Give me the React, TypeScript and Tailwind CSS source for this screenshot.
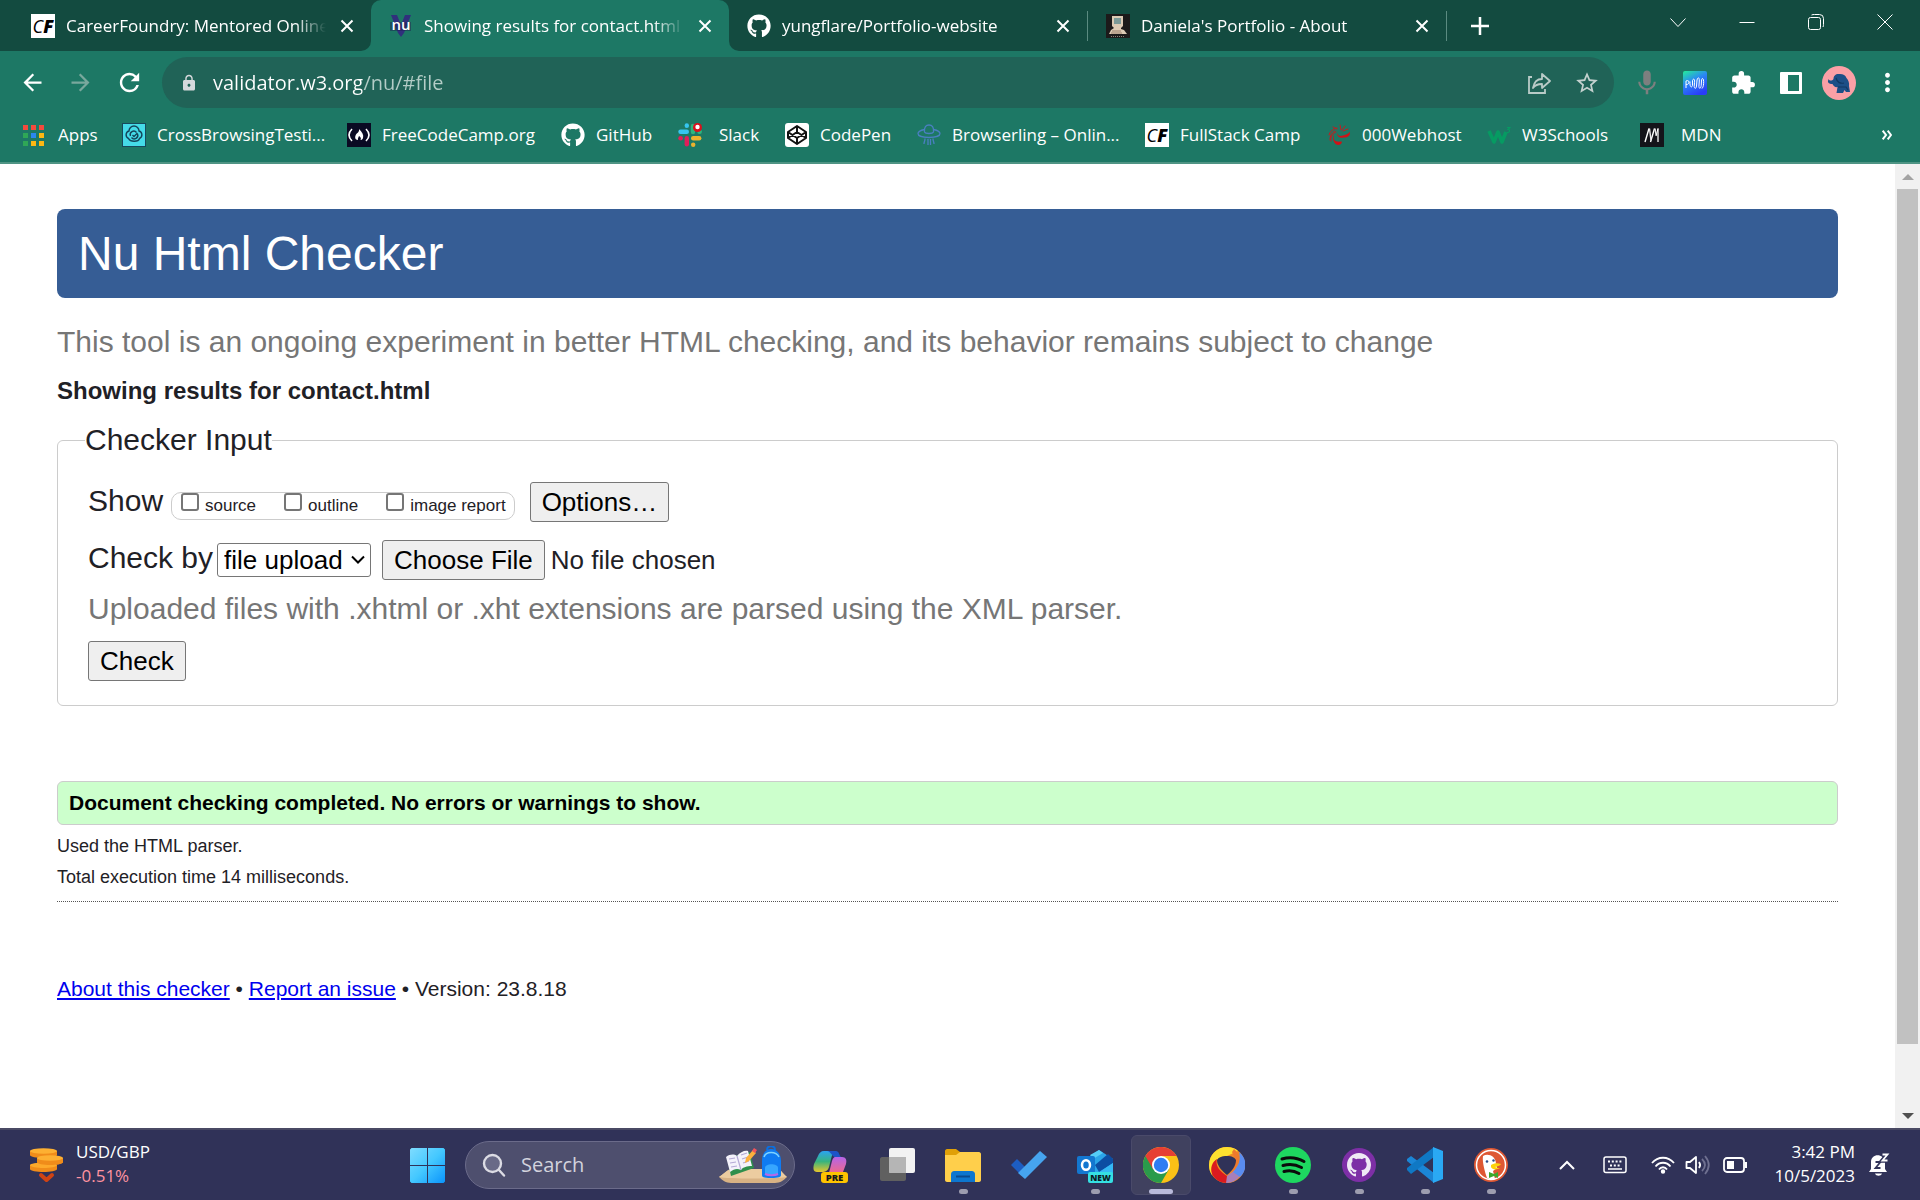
import React from "react";
import type { ReactNode } from "react";
import {
  MdArrowBack,
  MdArrowForward,
  MdRefresh,
  MdLock,
  MdStarBorder,
  MdMic,
  MdExtension,
  MdMoreVert,
} from "react-icons/md";
import { FaGithub } from "react-icons/fa";

/* ---------- Small site icons ---------- */

const CareerFoundryIcon = () => (
  <span className="flex size-6 shrink-0 items-center justify-center bg-white text-[18px] leading-6 text-black italic">
    C<b className="font-black">F</b>
  </span>
);

const NuIcon = () => (
  <svg viewBox="0 0 24 24" className="size-6 shrink-0">
    <path d="M2 1h6l4 10 4-10h6l-7 18-3 4-3-4z" fill="#30307c" />
    <path d="M1 8h21v9H1z" fill="#1c1c50" opacity=".45" />
    <text x="12" y="16" textAnchor="middle" fontSize="15" fontWeight="600" fontFamily="Open Sans, sans-serif" fill="#fff">
      nu
    </text>
  </svg>
);

const ComputerIcon = () => (
  <svg viewBox="0 0 24 24" className="size-6 shrink-0">
    <rect width="24" height="24" fill="#1c1a1a" />
    <path d="M6 2h11v10l-2 2v1l3 1 3 4H3l2-4 3-2-2-2z" fill="#dccbb5" />
    <rect x="8" y="4" width="7" height="6" fill="#7c9a98" />
    <path d="M6 17h9M5 19h11" stroke="#8d6f5c" strokeWidth=".8" />
    <path d="M5 22.500h14" stroke="#8b8377" strokeWidth="1" strokeDasharray="1 1" />
  </svg>
);

const AppsIcon = () => (
  <svg viewBox="0 0 24 24" className="size-6 shrink-0">
    {["#f44a3d", "#f44a3d", "#f44a3d", "#2fa756", "#2b87f0", "#fdb813", "#2fa756", "#fdb813", "#fdb813"].map((c, i) => (
      <rect key={i} x={(i % 3) * 8} y={2 + Math.floor(i / 3) * 8} width="5" height="5" fill={c} />
    ))}
  </svg>
);

const CrossBrowserIcon = () => (
  <svg viewBox="0 0 24 24" className="size-6 shrink-0">
    <rect x=".5" y=".5" width="23" height="23" fill="#45dbe8" stroke="#174a5c" />
    <path d="M6.500 15.500a4 4 0 0 1 .5-7.500 5 5 0 0 1 10 0 4 4 0 0 1 .5 7.500c-1 3.500-9 4-11 0zM8.500 13a3.500 3.500 0 0 1 6-3.500M15.500 11a3.500 3.500 0 0 1-6 3.500M10.500 12l1.500 1.500 3.500-3.500" fill="none" stroke="#14455a" strokeWidth="1.400" />
  </svg>
);

const FreeCodeCampIcon = () => (
  <svg viewBox="0 0 24 24" className="size-6 shrink-0">
    <rect width="24" height="24" fill="#0a0a23" />
    <path d="M5 6c-4 4-4 8 0 12M19 6c4 4 4 8 0 12" fill="none" stroke="#fff" strokeWidth="1.600" />
    <path d="M12 6c3 3 5 6 4 9-.5 1.500-1.500 2-2.500 2 1-2 0-3-1.500-4-.5 1.500-1.500 2.500-1 4-3 0-3.500-3-2-5.500C10.500 9.500 12.500 9 12 6z" fill="#fff" />
  </svg>
);

const SlackIcon = () => (
  <svg viewBox="0 0 24 24" className="size-6 shrink-0">
    <g strokeLinecap="round" strokeWidth="4.400">
      <path d="M2.500 8.800h6.300" stroke="#36c5f0" />
      <path d="M8.800 2.400v.4" stroke="#36c5f0" />
      <path d="M15 3v6" stroke="#2eb67d" />
      <path d="M21.500 8.800h.2" stroke="#2eb67d" />
      <path d="M15.200 15.300h6" stroke="#ecb22e" />
      <path d="M15.200 21.600v.1" stroke="#ecb22e" />
      <path d="M8.800 15.300v6" stroke="#e01e5a" />
      <path d="M2.500 15.300h.2" stroke="#e01e5a" />
    </g>
    <circle cx="19.500" cy="4.500" r="4.500" fill="#d8111d" />
    <circle cx="19.500" cy="4" r="2.200" fill="#fff" />
  </svg>
);

const CodePenIcon = () => (
  <svg viewBox="0 0 24 24" className="size-6 shrink-0">
    <rect width="24" height="24" rx="3" fill="#fff" />
    <path d="M12 3l9 6v6l-9 6-9-6V9zM12 3v6.200M12 14.800V21M3 9l9 6 9-6M3 15l9-6 9 6" fill="none" stroke="#111" strokeWidth="2" strokeLinejoin="round" />
  </svg>
);

const BrowserlingIcon = () => (
  <svg viewBox="0 0 24 24" className="size-6 shrink-0" fill="none" stroke="#4a7fc1" strokeWidth="1.300">
    <path d="M7.500 9C7 4 9 2 12 2s5 2 4.500 7c-1 2-8 2-9 0zM7.500 6.500C3 7.500 1 9 1 10.500 1 13 6 14.500 12 14.500s11-1.500 11-4c0-1.500-2-3-6.500-4" />
    <path d="M8 15.500c0 3-1 3-1 5.500M11 16v6M13.500 16v6M16 15.500c0 3 1 3 1 5.500" />
  </svg>
);

const WebhostIcon = () => (
  <svg viewBox="0 0 24 24" className="size-6 shrink-0">
    <path d="M10 10c1 3 3 3.500 6 2.500 3-1 6-1.500 6.500-4 1.500 4-2 6-5.500 6-4 1-7-1-7-4.500z" fill="#d01217" />
    <path d="M7 11c-1 4 0 7 3 7.500 2 .5 4-.5 5 .5-1 4-6 4-8 0-1.500-3-1.500-6 0-8z" fill="#d01217" />
    <path d="M10 5C6 6 3 8 2 12M8 8c-4 2-5 5-5 9M9 9c-4 2-6 5-5 9M6 4l4 2M13 2l1 5M18 3l-3 4M21 6l-5 2" fill="none" stroke="#c81a1d" strokeWidth="1" strokeLinecap="round" />
  </svg>
);

const W3Icon = () => (
  <svg viewBox="0 0 24 24" className="size-6 shrink-0" fill="none" stroke="#069b62">
    <path d="M2 8l5 11 4-10 4 10 4-10" strokeWidth="3.600" strokeLinejoin="round" />
    <path d="M20 4.500h3l-2 2c2 0 2.500 3-1 3" strokeWidth="1.100" />
  </svg>
);

const MdnIcon = () => (
  <svg viewBox="0 0 24 24" className="size-6 shrink-0">
    <rect width="24" height="24" fill="#14141a" />
    <path d="M5 19L9 5.500M10.500 19L14.500 5.500" fill="none" stroke="#fff" strokeWidth="1.400" />
    <path d="M9.500 5.500l1.500 12M15 5.500l1.200 7M18 5.500V19" fill="none" stroke="#e6e6e6" strokeWidth="1.400" />
    <path d="M16 13l2-7.500" fill="none" stroke="#fff" strokeWidth="1" />
  </svg>
);

/* ---------- Browser frame ---------- */

const CrossGlyph = () => (
  <svg viewBox="0 0 14 14" className="size-3.5" fill="none" stroke="#fff" strokeWidth="2">
    <path d="M1.500 1.500l11 11M12.500 1.500l-11 11" />
  </svg>
);

function Tab({ icon, title }: { icon: ReactNode; title: string }) {
  return (
    <div className="flex h-full w-[358px] items-center pr-[17px] pl-[18px]">
      {icon}
      <span className="mr-3.5 ml-[11px] min-w-0 flex-1 overflow-hidden text-[17px] whitespace-nowrap [mask-image:linear-gradient(to_right,#000_88%,transparent)]">
        {title}
      </span>
      <button aria-label={`Close ${title}`}>
        <CrossGlyph />
      </button>
    </div>
  );
}

function TabStrip() {
  return (
    <div className="flex h-[51px] bg-[#1d7865]">
      <div className="rounded-br-[10px] bg-[#134b40] pl-[13px]">
        <Tab icon={<CareerFoundryIcon />} title="CareerFoundry: Mentored Online" />
      </div>
      <div className="bg-[#134b40]">
        <div className="h-full rounded-t-[10px] bg-[#1d7865]">
          <Tab icon={<NuIcon />} title="Showing results for contact.html" />
        </div>
      </div>
      <div className="flex min-w-0 flex-1 items-center rounded-bl-[10px] bg-[#134b40]">
        <Tab icon={<FaGithub size={24} className="shrink-0" />} title="yungflare/Portfolio-website" />
        <div className="h-[30px] w-px bg-[#5b8b81]" />
        <Tab icon={<ComputerIcon />} title="Daniela's Portfolio - About" />
        <div className="h-[30px] w-px bg-[#5b8b81]" />
        <button aria-label="New tab" className="ml-6">
          <svg viewBox="0 0 18 18" className="size-[18px]" stroke="#fff" strokeWidth="2.500">
            <path d="M9 0v18M0 9h18" />
          </svg>
        </button>
        <div className="mr-[27px] mb-2 ml-auto flex gap-[53px]">
          <button aria-label="Search tabs">
            <svg viewBox="0 0 16 16" className="size-4" fill="none" stroke="#fff">
              <path d="M.5 4.500L8 12.500l7.500-8" />
            </svg>
          </button>
          <button aria-label="Minimize">
            <svg viewBox="0 0 16 16" className="size-4" fill="none" stroke="#fff">
              <path d="M.5 8.500h15" />
            </svg>
          </button>
          <button aria-label="Restore">
            <svg viewBox="0 0 16 16" className="size-4" fill="none" stroke="#fff">
              <rect x=".5" y="3.500" width="12" height="12" rx="2" />
              <path d="M3.500 1c1-.5 2-.5 3-.5h5a4 4 0 0 1 4 4v6c0 1 0 1.500-.5 2.500" />
            </svg>
          </button>
          <button aria-label="Close window">
            <svg viewBox="0 0 16 16" className="size-4" fill="none" stroke="#fff">
              <path d="M.5.5l15 15M15.500.5l-15 15" />
            </svg>
          </button>
        </div>
      </div>
    </div>
  );
}

const toolButton = "flex w-12 shrink-0 items-center justify-center";

function Toolbar() {
  return (
    <div className="flex items-center pt-1.5 pr-[9px] pl-[19px]">
      <button aria-label="Back">
        <MdArrowBack size={27} />
      </button>
      <button aria-label="Forward" className="ml-[21px] text-[#79a89d]">
        <MdArrowForward size={27} />
      </button>
      <button aria-label="Reload" className="ml-[21px]">
        <MdRefresh size={29} />
      </button>
      <div className="ml-[18px] flex h-[51px] min-w-0 flex-1 items-center rounded-full bg-[#206357] pr-[3px] pl-[18px]">
        <MdLock size={18} className="shrink-0 text-[#d5d9dc]" />
        <input
          aria-label="Address"
          defaultValue="validator.w3.org/nu/#file"
          className="ml-[15px] min-w-0 flex-1 bg-[linear-gradient(to_right,#ffffff_149px,#b4cdc7_149px)] bg-clip-text text-[20px] text-transparent outline-none"
        />
        <button aria-label="Share" className={toolButton}>
          <svg viewBox="0 0 24 24" className="size-6" fill="none" stroke="#b9cbc7" strokeWidth="1.800">
            <path d="M5 6H2v16h16v-4" />
            <path d="M6 17c1-6 4-9 9-9V3l8 7-8 7v-4c-4 0-7 1-9 4z" strokeLinejoin="round" />
          </svg>
        </button>
        <button aria-label="Bookmark this page" className={`text-[#c3d1ce] ${toolButton}`}>
          <MdStarBorder size={26} />
        </button>
      </div>
      <div className="ml-[9px] flex items-center">
        <button aria-label="Voice" className={`text-[#7d7f7f] ${toolButton}`}>
          <MdMic size={30} />
        </button>
        <button aria-label="Audio extension" className={toolButton}>
          <svg viewBox="0 0 24 24" className="size-6">
            <defs>
              <linearGradient id="ext" x1=".1" y1="0" x2=".6" y2="1">
                <stop offset="0" stopColor="#25e6a0" />
                <stop offset=".45" stopColor="#2a86f5" />
                <stop offset="1" stopColor="#2a3df8" />
              </linearGradient>
            </defs>
            <rect width="24" height="24" rx="2" fill="url(#ext)" />
            <path
              d="M3 17V10M3 10c4-2 4 4 0 3.500M7 10.500c-.5 5 1.500 7 2.500 4V9.500c1-2.500 2.500-1.500 2 2l-.3 4c.5 3 2 2 2.300-.5l.5-6c1-3.500 2.500-2.500 2.300 1l-.4 5.500c.5 3 1.800 2 2.300-1l.4-6c1-2.500 2.400 0 2 4-.2 3-.8 4-1.600 5"
              fill="none"
              stroke="#fff"
              strokeWidth="1"
            />
          </svg>
        </button>
        <button aria-label="Extensions" className={toolButton}>
          <MdExtension size={26} />
        </button>
        <button aria-label="Side panel" className={toolButton}>
          <svg viewBox="0 0 22 22" className="size-[22px]">
            <rect width="22" height="22" rx="1" fill="#fff" />
            <rect x="8" y="3" width="11" height="16" fill="#1d7865" />
          </svg>
        </button>
        <button aria-label="Profile" className={toolButton}>
          <svg viewBox="0 0 34 34" className="size-[34px]">
            <circle cx="17" cy="17" r="17" fill="#fba0a6" />
            <path d="M6.500 13c1 2 3.500 2 5 0 0-3 2-5 5-5 4-.5 7 1 8 4 2 2 3 5 2.500 8l1 6h-4l-1.500-2-1.500 3h-6.500l1-6c-2 .5-4-.5-5-3-2 .5-5-1-4.500-3z" fill="#1d4f87" />
            <path d="M14 12c1 4 4 6 8 5M16 21h8l2 3" stroke="#123863" strokeWidth="1.200" fill="none" />
          </svg>
        </button>
        <button aria-label="Menu" className={toolButton}>
          <MdMoreVert size={29} />
        </button>
      </div>
    </div>
  );
}

const bookmarks: { label: string; icon: ReactNode; box: string }[] = [
  { label: "Apps", icon: <AppsIcon />, box: "w-[99px] gap-[11px]" },
  { label: "CrossBrowsingTesti...", icon: <CrossBrowserIcon />, box: "w-[225px] gap-[11px]" },
  { label: "FreeCodeCamp.org", icon: <FreeCodeCampIcon />, box: "w-[214px] gap-[11px]" },
  { label: "GitHub", icon: <FaGithub size={24} />, box: "w-[117px] gap-[11px]" },
  { label: "Slack", icon: <SlackIcon />, box: "w-[107px] gap-[17px]" },
  { label: "CodePen", icon: <CodePenIcon />, box: "w-[132px] gap-[11px]" },
  { label: "Browserling – Onlin...", icon: <BrowserlingIcon />, box: "w-[228px] gap-[11px]" },
  { label: "FullStack Camp", icon: <CareerFoundryIcon />, box: "w-[182px] gap-[11px]" },
  { label: "000Webhost", icon: <WebhostIcon />, box: "w-[160px] gap-[11px]" },
  { label: "W3Schools", icon: <W3Icon />, box: "w-[153px] gap-[11px]" },
  { label: "MDN", icon: <MdnIcon />, box: "w-[100px] gap-[17px]" },
];

function BookmarksBar() {
  return (
    <nav aria-label="Bookmarks" className="flex h-14 items-center border-b-2 border-[#4f9484] pr-7 pl-[23px] text-[17px]">
      {bookmarks.map((b) => (
        <a key={b.label} href="#" className={`flex shrink-0 items-center whitespace-nowrap ${b.box}`}>
          {b.icon}
          {b.label}
        </a>
      ))}
      <button aria-label="More bookmarks" className="ml-auto">
        <svg viewBox="0 0 10 10" className="size-2.5" fill="none" stroke="#fff" strokeWidth="2">
          <path d="M.7.7L4 5 .7 9.300M5.700.7L9 5 5.700 9.300" />
        </svg>
      </button>
    </nav>
  );
}

/* ---------- Page ---------- */

const buttonClass =
  "h-10 rounded-[3px] border border-[#767676] bg-[#efefef] px-[11px] text-[26px] leading-[38px] text-black";

function CheckOption({ label }: { label: string }) {
  return (
    <label className="flex items-start gap-1.5">
      <input type="checkbox" className="size-[18px] appearance-none rounded-[3px] border-2 border-[#767676] bg-white" />
      <span className="leading-[26px]">{label}</span>
    </label>
  );
}

function CheckerPage() {
  return (
    <main className="min-w-0 flex-1 bg-white px-[57px] pt-[45px] font-['Liberation_Sans',Arial,sans-serif] text-[#1f2126]">
      <h1 className="rounded-lg bg-[#365d95] px-[21px] text-[48px] leading-[89px] text-white">Nu Html Checker</h1>
      <p className="mt-6 text-[30px] leading-10 text-[#767676]">
        This tool is an ongoing experiment in better HTML checking, and its behavior remains subject to change
      </p>
      <h2 className="mt-[13px] text-[24px] leading-8 font-bold">Showing results for contact.html</h2>
      <form onSubmit={(e) => e.preventDefault()}>
        <fieldset className="mt-[13px] rounded-md border border-[#ccc] px-[30px] pb-6">
          <legend className="-ml-[3px] text-[30px] leading-10">Checker Input</legend>
          <div className="mt-[21px] flex h-10 items-baseline text-[30px] leading-10">
            Show
            <div role="group" aria-label="Show" className="ml-2 flex h-7 items-start gap-7 rounded-[10px] border border-[#ccc] pr-2 pl-[9px] text-[17px]">
              <CheckOption label="source" />
              <CheckOption label="outline" />
              <CheckOption label="image report" />
            </div>
            <button type="button" className={`ml-[15px] ${buttonClass}`}>
              Options…
            </button>
          </div>
          <div className="mt-[19px] flex h-10 items-center text-[30px]">
            <label htmlFor="source-kind" className="pb-1 leading-9">
              Check by
            </label>
            <span className="ml-1 grid items-center">
              <select
                id="source-kind"
                className="col-start-1 row-start-1 h-[34px] appearance-none rounded-[3px] border border-[#767676] bg-white pr-[27px] pl-1.5 text-[26px] leading-8 text-black"
              >
                <option>file upload</option>
              </select>
              <svg viewBox="0 0 14 10" className="pointer-events-none col-start-1 row-start-1 mr-1.5 h-2.5 w-3.5 justify-self-end" fill="none" stroke="#000" strokeWidth="2">
                <path d="M1 1.500l6 6 6-6" />
              </svg>
            </span>
            <input
              type="file"
              aria-label="File to check"
              className="ml-[11px] text-[26px] file:mr-1.5 file:h-10 file:rounded-[3px] file:border file:border-solid file:border-[#767676] file:bg-[#efefef] file:px-[11px] file:text-[26px] file:text-black"
            />
          </div>
          <p className="mt-[9px] text-[30px] leading-10 text-[#767676]">
            Uploaded files with .xhtml or .xht extensions are parsed using the XML parser.
          </p>
          <button type="submit" className={`mt-3 block ${buttonClass}`}>
            Check
          </button>
        </fieldset>
      </form>
      <p className="mt-[75px] rounded-md border border-[#ccc] bg-[#ccffcc] px-[11px] text-[21px] leading-[42px] font-bold text-black">
        Document checking completed. No errors or warnings to show.
      </p>
      <div className="mt-1.5 text-[18px] leading-[31px]">
        <p>Used the HTML parser.</p>
        <p>Total execution time 14 milliseconds.</p>
      </div>
      <hr className="mt-2 border-t border-dotted border-[#555]" />
      <p className="mt-[73px] text-[21px] leading-7">
        <a href="#about" className="text-[#0000ee] underline">About this checker</a>
        {" • "}
        <a href="#issue" className="text-[#0000ee] underline">Report an issue</a>
        {" • Version: 23.8.18"}
      </p>
    </main>
  );
}

function ScrollTrack() {
  return (
    <div className="flex w-[25px] flex-col items-center bg-[#f1f1f1]">
      <div className="flex h-[25px] items-center">
        <svg viewBox="0 0 12 6" className="h-1.5 w-3">
          <path d="M0 6l6-6 6 6z" fill="#a3a3a3" />
        </svg>
      </div>
      <div className="w-[21px] flex-[855] bg-[#c1c1c1]" />
      <div className="flex-[59]" />
      <div className="flex h-[25px] items-center">
        <svg viewBox="0 0 12 6" className="h-1.5 w-3">
          <path d="M0 0l6 6 6-6z" fill="#505050" />
        </svg>
      </div>
    </div>
  );
}

/* ---------- Taskbar ---------- */

function TaskApp({ name, state, children }: { name: string; state?: "open" | "active"; children: ReactNode }) {
  return (
    <button
      aria-label={name}
      className={`flex h-[60px] w-[60px] shrink-0 flex-col items-center rounded-md border pt-[11px] ${
        state === "active" ? "border-[#4a4a6a] bg-[#40415f]" : "border-transparent"
      }`}
    >
      <svg viewBox="0 0 36 36" className="size-9">
        {children}
      </svg>
      {state === "open" && <span className="mt-1.5 h-[5px] w-[9px] rounded-full bg-[#9d9daf]" />}
      {state === "active" && <span className="mt-1.5 h-[5px] w-6 rounded-full bg-[#b9badb]" />}
    </button>
  );
}

const githubMark =
  "M8 0C3.580 0 0 3.580 0 8c0 3.540 2.290 6.530 5.470 7.590.4.070.55-.17.55-.38 0-.19-.01-.82-.01-1.490-2.010.37-2.530-.49-2.690-.94-.09-.23-.48-.94-.82-1.130-.28-.15-.68-.52-.01-.53.63-.01 1.080.58 1.230.82.72 1.210 1.870.87 2.330.66.070-.52.28-.87.51-1.070-1.780-.2-3.640-.89-3.640-3.950 0-.87.31-1.590.82-2.150-.08-.2-.36-1.020.08-2.120 0 0 .67-.21 2.200.82.64-.18 1.320-.27 2-.27s1.360.09 2 .27c1.530-1.040 2.200-.82 2.200-.82.44 1.100.16 1.920.08 2.120.51.56.82 1.270.82 2.150 0 3.070-1.870 3.750-3.650 3.950.29.25.54.73.54 1.480 0 1.070-.01 1.930-.01 2.200 0 .21.15.46.55.38A8 8 0 0 0 16 8c0-4.420-3.580-8-8-8z";

function Taskbar() {
  return (
    <footer className="grid h-[72px] grid-cols-[1fr_auto_1fr] items-center border-t-2 border-[#4a4a64] bg-[#303258] text-white">
      <div className="flex items-center pl-[29px]">
        <svg viewBox="0 0 36 36" className="size-9 shrink-0">
          <g fill="#f08c1a">
            <path d="M1 4v4c0 4 27 4 27 0V4z" />
            <path d="M1 18v4c0 4 27 4 27 0v-4z" />
            <path d="M8 11v4c0 4 26 4 26 0v-4z" />
          </g>
          <path d="M1 18c0-3 27-3 27 0 0 4-27 4-27 0z" fill="#fda92b" />
          <path d="M8 11v4c0 4 26 4 26 0v-4z" fill="#f08c1a" />
          <g fill="#fdb032">
            <ellipse cx="21" cy="11" rx="13" ry="2.800" />
            <ellipse cx="14.500" cy="4" rx="13.500" ry="2.800" />
          </g>
          <path d="M12 28l5.500 5 5.500-5" fill="none" stroke="#cf4314" strokeWidth="4" strokeLinecap="round" strokeLinejoin="round" />
        </svg>
        <div className="ml-[11px] pb-0.5 text-[17px] leading-6">
          <p>USD/GBP</p>
          <p className="text-[#ff93a0]">-0.51%</p>
        </div>
      </div>

      <div className="flex items-center pl-[11px]">
        <button aria-label="Start">
          <svg viewBox="0 0 35 35" className="size-[35px]">
            <defs>
              <linearGradient id="win" x1="0" y1="0" x2="1" y2="1">
                <stop offset="0" stopColor="#7fdcff" />
                <stop offset=".5" stopColor="#44c8ff" />
                <stop offset="1" stopColor="#0a94fb" />
              </linearGradient>
            </defs>
            <path d="M1.500 0H17v17H0V1.500zM18 0h15.500L35 1.500V17H18zM0 18h17v17H1.500L0 33.500zM18 18h17v15.500L33.500 35H18z" fill="url(#win)" />
          </svg>
        </button>
        <div className="mr-1.5 ml-5 flex h-12 w-[330px] items-center rounded-full border border-[#6b6b8a] bg-[#4e4f6e] pr-[7px] pl-4">
          <svg viewBox="0 0 24 24" className="size-6 shrink-0" fill="none" stroke="#dcdce4" strokeWidth="2.400" strokeLinecap="round">
            <circle cx="10.500" cy="10.500" r="8.500" fill="#696a87" />
            <path d="M17 17l5 5.500" />
          </svg>
          <input
            type="search"
            aria-label="Search"
            placeholder="Search"
            className="ml-[15px] min-w-0 flex-1 text-[20px] text-white outline-none placeholder:text-[#d3d3dd]"
          />
          <svg viewBox="0 0 68 38" className="h-[38px] w-[68px] shrink-0">
            <path d="M0 31c5-3 8-8 14-8h44c4 0 6 5 10 8-3 3-7 6-12 6H12C7 37 3 34 0 31z" fill="#d8b284" />
            <path d="M0 31c5-3 8-8 14-8h44c4 0 6 5 10 8-9 2-60 2-68 0z" fill="#eccca0" />
            <path d="M8 12l23-6 4 16-23 8z" fill="#2f8f4c" />
            <path d="M7 11c4-3 8-3 11-1 3-4 8-6 11-5l4 15c-5 0-9 1-11 4-4-2-7-1-11 2z" fill="#f4f2fb" />
            <path d="M18 10l4 14M10 13l6-1M11 17l6-1M12 21l6-1M22 9l6-2M23 13l6-2M24 17l6-2" stroke="#b4a9d6" strokeWidth="1.200" />
            <path d="M26 17l1-5 7-8 3 3-7 8z" fill="#fdb03c" />
            <path d="M33 5l2-3 3 2-2 3z" fill="#f2545b" />
            <path d="M48 4c0-5 8-5 8 0" stroke="#0b6fe0" strokeWidth="2" fill="none" />
            <path d="M43 15c0-8 4-12 9-12s10 4 10 12v14c0 2-2 3-10 3s-9-1-9-3z" fill="#0f7bf2" />
            <path d="M45 11c2-6 12-6 15 0" fill="none" stroke="#7dd3ff" strokeWidth="1.500" />
            <path d="M46 22c0-5 13-5 13 0v7H46z" fill="#36a6ff" />
            <path d="M46 28c3 1.500 10 1.500 13 0" stroke="#b368e8" strokeWidth="2" fill="none" />
          </svg>
        </div>
        <div className="flex gap-1.5">
          <TaskApp name="Copilot">
            <defs>
              <linearGradient id="copA" x1="0" y1="0" x2="0" y2="1">
                <stop offset="0" stopColor="#2ba3f2" />
                <stop offset=".5" stopColor="#38b47e" />
                <stop offset="1" stopColor="#e8c62c" />
              </linearGradient>
              <linearGradient id="copB" x1="0" y1="0" x2="0" y2="1">
                <stop offset="0" stopColor="#b565e8" />
                <stop offset="1" stopColor="#fb6a78" />
              </linearGradient>
            </defs>
            <path d="M11 4h12c-3 1-4 4-5 8l-2 8c-1 4-4 5-7 5H4c-4 0-4-4-3-8l4-8c1-3 3-5 6-5z" fill="url(#copA)" />
            <path d="M14 4h9c3 0 3 4 5 6h-6c-3 0-4-6-8-6z" fill="#1c54c8" />
            <path d="M22 10h7c4 0 5 3 4 7l-3 8c-1 3-3 4-6 4H12c3-1 4-3 5-7l2-8c1-3 2-4 3-4z" fill="url(#copB)" />
            <rect x="8" y="25" width="27" height="11" rx="3" fill="#ffc400" />
            <text x="21.500" y="34" textAnchor="middle" fontSize="9.500" fontWeight="800" fontFamily="Open Sans, sans-serif" fill="#1a1a1a">PRE</text>
          </TaskApp>
          <TaskApp name="Task view">
            <path d="M1 12c0-1 1-2 2-2h24v22c0 1-1 2-2 2H3c-1 0-2-1-2-2z" fill="#606060" />
            <rect x="10" y="1" width="26" height="25" rx="2" fill="#f2f2f2" />
            <path d="M10 10h17v16H11c-1 0-1-1-1-2z" fill="#b5b5b5" />
          </TaskApp>
          <TaskApp name="File Explorer" state="open">
            <path d="M0 4c0-1 1-2 2-2h9l4 3v5H0z" fill="#e0a007" />
            <path d="M0 8h11l4-3h19c1 0 2 1 2 2v26c0 1-1 2-2 2H2c-1 0-2-1-2-2z" fill="#ffcf4b" />
            <path d="M6 35v-7c0-3 1-4 4-4h16c3 0 4 1 4 4v7z" fill="#0d76cf" />
            <path d="M11 29.500h14" stroke="#0a4a8e" strokeWidth="2" />
          </TaskApp>
          <TaskApp name="To Do">
            <path d="M0 18l6-6 9 9-4 8z" fill="#1d5dc2" />
            <path d="M7 26L29 4l7 6-22 22z" fill="#46a4ef" />
          </TaskApp>
          <TaskApp name="Outlook" state="open">
            <path d="M9 12L22 3l14 9v20c0 2-1 3-3 3H12z" fill="#2ba5e8" />
            <path d="M18 18L31 7l5 5v4L22 25z" fill="#0c4ea3" />
            <path d="M13 8l9-5 4 3-10 6z" fill="#55cdf7" />
            <path d="M18 28l18-12v14H18z" fill="#35b9f4" />
            <rect x="0" y="9" width="18" height="18" rx="2" fill="#1377d0" />
            <ellipse cx="9" cy="18" rx="4" ry="4.800" fill="none" stroke="#fff" strokeWidth="2.500" />
            <rect x="11" y="25" width="25" height="11" rx="2" fill="#35e0e3" />
            <text x="23.500" y="34" textAnchor="middle" fontSize="8.500" fontWeight="800" fontFamily="Open Sans, sans-serif" fill="#0c1c24">NEW</text>
          </TaskApp>
          <TaskApp name="Chrome" state="active">
            <circle cx="18" cy="18" r="18" fill="#fbc116" />
            <path d="M18 18L2.400 9A18 18 0 0 0 18 36l7.800-13.500z" fill="#2a9b4b" />
            <path d="M2.400 9A18 18 0 0 1 33.600 9H18l-7.800 13.500z" fill="#e63f34" />
            <circle cx="18" cy="18" r="9" fill="#fff" />
            <circle cx="18" cy="18" r="7.200" fill="#2f7df3" />
          </TaskApp>
          <TaskApp name="Mozilla">
            <circle cx="18" cy="18" r="18" fill="#f08a24" />
            <path d="M18 0A18 18 0 0 0 0 18c0 4 1 7 3 10 1-9 2-18 15-19l11-5C26 1 22 0 18 0z" fill="#fde02f" />
            <path d="M3 27c3 6 9 9 15 9l4-8-4 1C10 24 6 18 8 12 3 15 1 21 3 27z" fill="#da1a1f" />
            <path d="M17 36c7 0 13-4 16-10l-7-3-8 6z" fill="#a87fb8" />
            <path d="M30 5c9 7 8 19 1 25l-7-5c5-6 8-11 6-20z" fill="#5a8cf0" />
            <path d="M25 2c8 6 7 15-3 24l4-14-3-7z" fill="#ee7a2d" />
            <path d="M8 13c2-3 5-4 10-4s7 1 9 4c0 6-4 11-9 15-5-4-10-9-10-15z" fill="#303258" />
          </TaskApp>
          <TaskApp name="Spotify" state="open">
            <circle cx="18" cy="18" r="18" fill="#1ed760" />
            <path d="M7 12c8-2.500 15-1.500 22 2.500M8 18.500c7-2 13-1 18.500 2M9 24.500c5-1.500 10-1 15 2" fill="none" stroke="#0b0b0b" strokeWidth="3" strokeLinecap="round" />
          </TaskApp>
          <TaskApp name="GitHub Desktop" state="open">
            <circle cx="18" cy="18" r="17" fill="#7d2fa6" />
            <g transform="translate(6 6) scale(1.500)">
              <path d={githubMark} fill="#efe9f5" />
            </g>
          </TaskApp>
          <TaskApp name="Visual Studio Code" state="open">
            <path d="M0 12l4-3 23 17v10L0 14z" fill="#1b86d6" />
            <path d="M0 23l4 4 23-17V0L0 21z" fill="#0f78c4" />
            <path d="M26 0l10 4v28l-10 4z" fill="#2aa9f4" />
          </TaskApp>
          <TaskApp name="DuckDuckGo" state="open">
            <circle cx="18" cy="18" r="17" fill="#de5833" />
            <circle cx="18" cy="18" r="14.500" fill="none" stroke="#fff" strokeWidth="1.500" />
            <path d="M10 9c5-3 13 0 13 8l1 4-4 3 2 8c-3 1-6 0-8-1-2-6-5-16-4-22z" fill="#fff" />
            <circle cx="14" cy="14.500" r="1.300" fill="#2d4f8e" />
            <circle cx="20.500" cy="13.500" r="1.200" fill="#2d4f8e" />
            <path d="M18 18c3-2 7-2 10-1-1 2-4 2-6 3 2 1 3 1 5 1-3 2-8 2-9-1z" fill="#fdd20a" />
            <path d="M16 25l5 2 4-2v6l-4-2-5 2z" fill="#3ca82b" />
          </TaskApp>
        </div>
      </div>

      <div className="flex items-center justify-end pr-[29px]">
        <svg viewBox="0 0 16 10" className="mr-7 h-2.5 w-4" fill="none" stroke="#fff" strokeWidth="2">
          <path d="M1 9l7-7 7 7" />
        </svg>
        <svg viewBox="0 0 24 18" className="mr-6 h-[18px] w-6" fill="none" stroke="#fff" strokeWidth="1.500">
          <rect x="1" y="1" width="22" height="15.500" rx="2" />
          <path d="M5 5.500h14M7 9.500h10" strokeDasharray="2 1.800" strokeWidth="2" />
          <path d="M5 13h14" />
        </svg>
        <svg viewBox="0 0 24 18" className="mr-2.5 h-[18px] w-6" fill="none" stroke="#fff" strokeWidth="1.800">
          <path d="M1 7c6-7 16-7 22 0M4.500 10.500c4-5 11-5 15 0M8 13.500c2-3 6-3 8 0" />
          <circle cx="12" cy="15.500" r="1.300" fill="#fff" />
        </svg>
        <svg viewBox="0 0 26 22" className="mr-3 h-[22px] w-[26px]" fill="none" stroke="#fff" strokeWidth="1.800">
          <path d="M1.500 8v6H5l6 5V3L5 8z" strokeLinejoin="round" />
          <path d="M14 8c1.500 2 1.500 4 0 6" />
          <path d="M17 5c4 4 4 8 0 12M20 2c5 6 5 12 0 18" stroke="#6f7090" />
        </svg>
        <svg viewBox="0 0 24 18" className="h-[18px] w-6" fill="none" stroke="#fff" strokeWidth="1.800">
          <rect x="1" y="2" width="20" height="14" rx="3" />
          <path d="M4 5h7v8H4z" fill="#fff" stroke="none" />
          <path d="M22.800 6v6" strokeWidth="2.400" />
        </svg>
        <div className="mr-3 w-[108px] pb-0.5 text-right text-[17px] leading-6">
          <p>3:42 PM</p>
          <p>10/5/2023</p>
        </div>
        <svg viewBox="0 0 24 24" className="size-6">
          <path d="M2 19l2-3V9c0-9 13-9 14 0v7l2 3zM8 20.500h7c-1 3-6 3-7 0z" fill="#fff" />
          <path d="M8.500 9h5l-5 6h5" fill="none" stroke="#303258" strokeWidth="1.800" />
          <path d="M15.500 1.500h5l-5 6h5" fill="none" stroke="#303258" strokeWidth="4.500" />
          <path d="M15.500 1.500h5l-5 6h5" fill="none" stroke="#fff" strokeWidth="1.800" />
        </svg>
      </div>
    </footer>
  );
}

export default function App() {
  return (
    <div className="flex min-h-screen flex-col font-['Open_Sans','Segoe_UI',sans-serif]">
      <header className="bg-[#1d7865] text-white">
        <TabStrip />
        <Toolbar />
        <BookmarksBar />
      </header>
      <div className="flex flex-1">
        <CheckerPage />
        <ScrollTrack />
      </div>
      <Taskbar />
    </div>
  );
}
